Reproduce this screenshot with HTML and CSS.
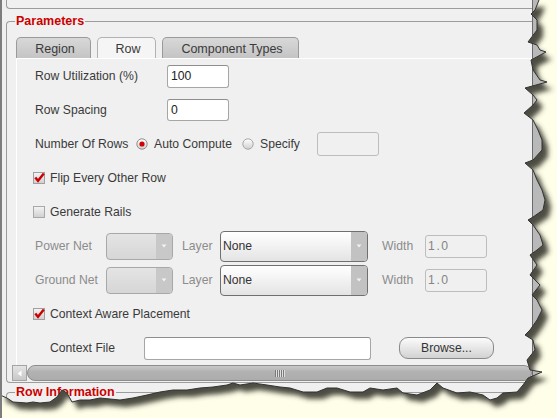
FILE: index.html
```html
<!DOCTYPE html>
<html>
<head>
<meta charset="utf-8">
<link rel="stylesheet" href="styles.css">
</head>
<body>
<div class="screen">
  <div class="col">
    <div class="prev"></div>
    <div class="group">
      <div class="legend">Parameters</div>
      <div class="scrollpane">
        <div class="tabs">
          <div class="tab t-region">Region</div>
          <div class="tab t-row sel">Row</div>
          <div class="tab t-comp">Component Types</div>
        </div>
        <div class="panel">
          <div class="row">
            <span class="lbl w132">Row Utilization (%)</span>
            <div class="input w62 h23">100</div>
          </div>
          <div class="row">
            <span class="lbl w132">Row Spacing</span>
            <div class="input w62 h22">0</div>
          </div>
          <div class="row">
            <span class="lbl w102">Number Of Rows</span>
            <svg class="radio" width="12" height="12" viewBox="0 0 12 12"><defs><linearGradient id="rg" x1="0" y1="0" x2="0" y2="1"><stop offset="0" stop-color="#ffffff"/><stop offset="1" stop-color="#d0d0d0"/></linearGradient></defs><circle cx="6" cy="6" r="5.2" fill="url(#rg)" stroke="#8e8e8e"/><circle cx="6" cy="6" r="2.6" fill="#d30000"/></svg>
            <span class="lbl rtext1">Auto Compute</span>
            <svg class="radio" width="12" height="12" viewBox="0 0 12 12"><circle cx="6" cy="6" r="5.2" fill="url(#rg)" stroke="#a8a8a8"/></svg>
            <span class="lbl rtext2">Specify</span>
            <div class="input dis w62 h24"></div>
          </div>
          <div class="row cb">
            <svg class="check" width="12" height="12" viewBox="0 0 12 12"><defs><linearGradient id="cg" x1="0" y1="0" x2="0" y2="1"><stop offset="0" stop-color="#f4f4f4"/><stop offset="1" stop-color="#cfcfcf"/></linearGradient></defs><rect x="0.5" y="0.5" width="11" height="11" fill="url(#cg)" stroke="#a0a0a0"/><path d="M2.3 5.6 L5 8.8 L10.8 1.6" fill="none" stroke="#cc0000" stroke-width="2.4"/></svg>
            <span class="lbl ctext">Flip Every Other Row</span>
          </div>
          <div class="row cb">
            <svg class="check" width="12" height="12" viewBox="0 0 12 12"><rect x="0.5" y="0.5" width="11" height="11" fill="url(#cg)" stroke="#a8a8a8"/></svg>
            <span class="lbl ctext">Generate Rails</span>
          </div>
          <div class="row">
            <span class="lbl gray w71">Power Net</span>
            <div class="combo dis w67 h27"><span class="cval"></span><span class="arrow"><svg width="6" height="4" viewBox="0 0 6 4"><path d="M0.5 0.5H5.5L3 3.5Z" fill="#f2f2f2"/></svg></span></div>
            <span class="lbl gray layer">Layer</span>
            <div class="combo w148 h31"><span class="cval">None</span><span class="arrow"><svg width="6" height="4" viewBox="0 0 6 4"><path d="M0.5 0.5H5.5L3 3.5Z" fill="#f2f2f2"/></svg></span></div>
            <span class="lbl gray wlab">Width</span>
            <div class="input dis num w62 h23">1.0</div>
          </div>
          <div class="row">
            <span class="lbl gray w71">Ground Net</span>
            <div class="combo dis w67 h27"><span class="cval"></span><span class="arrow"><svg width="6" height="4" viewBox="0 0 6 4"><path d="M0.5 0.5H5.5L3 3.5Z" fill="#f2f2f2"/></svg></span></div>
            <span class="lbl gray layer">Layer</span>
            <div class="combo w148 h31"><span class="cval">None</span><span class="arrow"><svg width="6" height="4" viewBox="0 0 6 4"><path d="M0.5 0.5H5.5L3 3.5Z" fill="#f2f2f2"/></svg></span></div>
            <span class="lbl gray wlab">Width</span>
            <div class="input dis num w62 h23">1.0</div>
          </div>
          <div class="row cb">
            <svg class="check" width="12" height="12" viewBox="0 0 12 12"><rect x="0.5" y="0.5" width="11" height="11" fill="url(#cg)" stroke="#a0a0a0"/><path d="M2.3 5.6 L5 8.8 L10.8 1.6" fill="none" stroke="#cc0000" stroke-width="2.4"/></svg>
            <span class="lbl ctext">Context Aware Placement</span>
          </div>
          <div class="row cf">
            <span class="lbl w94">Context File</span>
            <div class="input w227 h23"></div>
            <div class="button">Browse...</div>
          </div>
        </div>
        <div class="hscroll">
          <div class="sbtn"><svg width="5" height="7" viewBox="0 0 5 7"><path d="M4.5 0.5V6.5L0.5 3.5Z" fill="#ffffff"/></svg></div>
          <div class="strack">
            <svg width="10" height="7" viewBox="0 0 10 7"><path d="M0.5 0V7M2.5 0V7M4.5 0V7M6.5 0V7M8.5 0V7" stroke="#7a7a7a" stroke-width="1"/><path d="M1.5 0V7M3.5 0V7M5.5 0V7M7.5 0V7M9.5 0V7" stroke="#e0e0e0" stroke-width="1"/></svg>
          </div>
        </div>
      </div>
    </div>
    <div class="group group2">
      <div class="legend">Row Information</div>
    </div>
  </div>
  <div class="vbar"></div>

  <svg class="tear" width="557" height="418" viewBox="0 0 557 418">
    <defs>
      <filter id="blur" x="-10%" y="-10%" width="120%" height="120%"><feGaussianBlur stdDeviation="2.6"/></filter>
      <clipPath id="outside"><path clip-rule="evenodd" d="M0 0H557V418H0Z M0 0L539 0L535 10L531 14L537 20L537 30L528 42L537 45L540 50L546 52L531 60L533 70L540 80L547 82L525 88L533 95L537 100L533 105L524 113L533 120L538 130L542 140L542 150L533 160L525 163L533 170L537 180L542 190L545 200L543 210L533 217L528 220L533 225L540 235L543 245L537 250L530 255L537 265L530 275L540 285L532 295L537 300L542 310L537 320L530 330L525 335L533 340L535 350L527 360L530 370L542 372L528 378L523 385L517 392L503 393L497 398L490 400L483 395L470 392L457 393L443 388L437 383L430 390L417 395L403 393L397 388L383 390L370 388L363 392L350 392L337 388L327 388L317 392L303 392L290 388L280 387L267 385L253 383L240 385L233 383L227 385L213 387L200 388L187 390L173 390L160 392L147 395L133 398L120 400L100 398L90 400L80 400L72 402L67 393L62 390L57 397L50 402L40 403L33 402L27 403L13 402L7 398L0 395Z"/></clipPath>
    </defs>
    <path fill="#fffee8" fill-rule="evenodd" d="M0 0H557V418H0Z M0 0L539 0L535 10L531 14L537 20L537 30L528 42L537 45L540 50L546 52L531 60L533 70L540 80L547 82L525 88L533 95L537 100L533 105L524 113L533 120L538 130L542 140L542 150L533 160L525 163L533 170L537 180L542 190L545 200L543 210L533 217L528 220L533 225L540 235L543 245L537 250L530 255L537 265L530 275L540 285L532 295L537 300L542 310L537 320L530 330L525 335L533 340L535 350L527 360L530 370L542 372L528 378L523 385L517 392L503 393L497 398L490 400L483 395L470 392L457 393L443 388L437 383L430 390L417 395L403 393L397 388L383 390L370 388L363 392L350 392L337 388L327 388L317 392L303 392L290 388L280 387L267 385L253 383L240 385L233 383L227 385L213 387L200 388L187 390L173 390L160 392L147 395L133 398L120 400L100 398L90 400L80 400L72 402L67 393L62 390L57 397L50 402L40 403L33 402L27 403L13 402L7 398L0 395Z"/>
    <g clip-path="url(#outside)">
      <path transform="translate(6 7)" fill="#3e3e34" fill-opacity="0.92" filter="url(#blur)" d="M0 0L539 0L535 10L531 14L537 20L537 30L528 42L537 45L540 50L546 52L531 60L533 70L540 80L547 82L525 88L533 95L537 100L533 105L524 113L533 120L538 130L542 140L542 150L533 160L525 163L533 170L537 180L542 190L545 200L543 210L533 217L528 220L533 225L540 235L543 245L537 250L530 255L537 265L530 275L540 285L532 295L537 300L542 310L537 320L530 330L525 335L533 340L535 350L527 360L530 370L542 372L528 378L523 385L517 392L503 393L497 398L490 400L483 395L470 392L457 393L443 388L437 383L430 390L417 395L403 393L397 388L383 390L370 388L363 392L350 392L337 388L327 388L317 392L303 392L290 388L280 387L267 385L253 383L240 385L233 383L227 385L213 387L200 388L187 390L173 390L160 392L147 395L133 398L120 400L100 398L90 400L80 400L72 402L67 393L62 390L57 397L50 402L40 403L33 402L27 403L13 402L7 398L0 395Z"/>
    </g>
    <path fill="none" stroke="#333333" stroke-width="1" d="M539 0L535 10L531 14L537 20L537 30L528 42L537 45L540 50L546 52L531 60L533 70L540 80L547 82L525 88L533 95L537 100L533 105L524 113L533 120L538 130L542 140L542 150L533 160L525 163L533 170L537 180L542 190L545 200L543 210L533 217L528 220L533 225L540 235L543 245L537 250L530 255L537 265L530 275L540 285L532 295L537 300L542 310L537 320L530 330L525 335L533 340L535 350L527 360L530 370L542 372L528 378L523 385L517 392L503 393L497 398L490 400L483 395L470 392L457 393L443 388L437 383L430 390L417 395L403 393L397 388L383 390L370 388L363 392L350 392L337 388L327 388L317 392L303 392L290 388L280 387L267 385L253 383L240 385L233 383L227 385L213 387L200 388L187 390L173 390L160 392L147 395L133 398L120 400L100 398L90 400L80 400L72 402L67 393L62 390L57 397L50 402L40 403L33 402L27 403L13 402L7 398L0 395"/>
  </svg>
</div>
</body>
</html>
```
FILE: styles.css
```css
html, body {
  margin: 0;
  padding: 0;
  background: #fffee8;
}

.screen {
  position: relative;
  width: 557px;
  height: 418px;
  overflow: hidden;
  box-sizing: border-box;
  display: flex;
  background: #f0f0f0;
  border-left: 2px solid #7d7d7d;
  font-family: "Liberation Sans", Arial, sans-serif;
  font-size: 12.2px;
  color: #333333;
}

.col {
  flex: none;
  width: 526px;
  margin-left: 4px;
}

.vbar {
  flex: 1;
  border-left: 1px solid #6a6a6a;
  background: #b9b9b9;
}

.prev {
  height: 8px;
  border-left: 1px solid #9c9c9c;
  border-bottom: 1px solid #9c9c9c;
  border-bottom-left-radius: 4px;
  margin-bottom: 12px;
}

.group {
  position: relative;
  border: 1px solid #9c9c9c;
  border-right: none;
  border-radius: 4px 0 0 4px;
  padding: 15px 0 1px 5px;
}

.group2 {
  margin-top: 9px;
  height: 40px;
  padding: 0;
  border-bottom: none;
  border-radius: 4px 0 0 0;
}

.legend {
  position: absolute;
  top: -8px;
  left: 8px;
  padding: 0 1px;
  line-height: 14px;
  font-size: 12.5px;
  font-weight: bold;
  color: #cc0000;
  background: #f0f0f0;
}

.scrollpane {
  width: 520px;
}

.tabs {
  display: flex;
  gap: 6px;
  padding-left: 4px;
  height: 21px;
}

.tab {
  box-sizing: border-box;
  height: 21px;
  display: flex;
  align-items: center;
  justify-content: center;
  padding-left: 3px;
  padding-top: 1px;
  border: 1px solid #9a9a9a;
  border-bottom: none;
  border-radius: 5px 5px 0 0;
  background: linear-gradient(#d8d8d8, #c4c4c4);
  font-size: 12.5px;
  color: #3a3a3a;
}

.t-region { width: 75px; }
.t-row { width: 59px; }
.t-comp { width: 137px; }

.tab.sel {
  background: #f5f5f5;
  border-color: #b2b2b2;
}

.panel {
  margin-left: 4px;
  border-top: 1px solid #ffffff;
  border-left: 1px solid #ffffff;
}

.row {
  height: 34px;
  display: flex;
  align-items: center;
  padding-left: 18px;
}

.row.cb { padding-left: 16px; }
.row.cf { padding-left: 33px; }

.lbl {
  flex: none;
  white-space: nowrap;
  color: #3a3a3a;
}

.lbl.gray { color: #8c8c8c; }

.w132 { width: 132px; }
.w102 { width: 101px; }
.w71 { width: 71px; }
.w94 { width: 94px; }

.rtext1 { width: 88px; margin-left: 6px; }
.rtext2 { width: 57px; margin-left: 6px; }
.ctext { margin-left: 5px; }
.layer { width: 38px; margin-left: 9px; }
.wlab { width: 43px; margin-left: 14px; }

.radio, .check { flex: none; display: block; }

.input {
  flex: none;
  box-sizing: border-box;
  background: #ffffff;
  border: 1px solid #a6a6a6;
  border-top-color: #8e8e8e;
  border-radius: 3px;
  padding-left: 3px;
  display: flex;
  align-items: center;
  color: #222222;
}

.input.dis {
  background: #f0f0f0;
  border-color: #bdbdbd;
}

.input.num {
  color: #858585;
  letter-spacing: 1.6px;
  padding-left: 2px;
}

.w62 { width: 62px; }
.w67 { width: 67px; }
.w148 { width: 148px; }
.w227 { width: 227px; }
.h22 { height: 22px; }
.h23 { height: 23px; }
.h24 { height: 24px; }
.h27 { height: 27px; }
.h31 { height: 31px; }

.combo {
  flex: none;
  box-sizing: border-box;
  display: flex;
  border: 1px solid #707070;
  border-radius: 4px;
  background: linear-gradient(#ffffff, #e4e4e4);
  overflow: hidden;
}

.combo.dis {
  border-color: #a8a8a8;
  background: linear-gradient(#e4e4e4, #d6d6d6);
}

.cval {
  flex: 1;
  display: flex;
  align-items: center;
  padding-left: 2px;
  color: #333333;
}

.arrow {
  flex: none;
  width: 16px;
  display: flex;
  align-items: center;
  justify-content: center;
  background: #c2c2c2;
}

.combo.dis .arrow {
  background: #c8c8c8;
}

.button {
  flex: none;
  box-sizing: border-box;
  width: 95px;
  height: 22px;
  margin-left: 28px;
  border: 1px solid #8a8a8a;
  border-radius: 9px;
  background: linear-gradient(#fbfbfb, #d2d2d2);
  display: flex;
  align-items: center;
  justify-content: center;
  color: #333333;
}

.hscroll {
  display: flex;
  height: 16px;
}

.sbtn {
  flex: none;
  width: 15px;
  box-sizing: border-box;
  border: 1px solid #a4a4a4;
  background: linear-gradient(#e4e4e4, #c8c8c8);
  display: flex;
  align-items: center;
  justify-content: center;
}

.strack {
  flex: 1;
  box-sizing: border-box;
  border: 1px solid #8c8c8c;
  border-radius: 8px;
  background: linear-gradient(#c8c8c8, #b2b2b2 40%, #acacac);
  display: flex;
  align-items: center;
  justify-content: center;
}

.tear {
  position: absolute;
  left: -2px;
  top: 0;
  pointer-events: none;
}
```
